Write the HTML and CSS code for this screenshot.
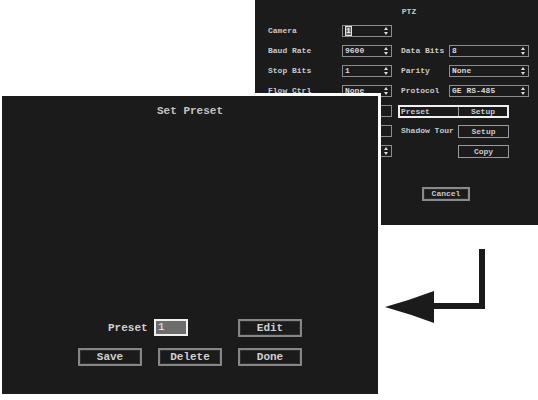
FILE: index.html
```html
<!DOCTYPE html>
<html lang="en">
<head>
    <meta charset="UTF-8">
    <title>PTZ - Set Preset</title>
    <link rel="stylesheet" href="styles.css">
</head>
<body>
    <div class="desk">
        <!-- PTZ setup window (behind) -->
        <div class="win ptz">
            <div class="ptz-title">PTZ</div>
            <div class="ptz-grid">
                <span class="lbl">Camera</span>
                <span class="sel cam"><i class="cur">1</i><b class="spin"></b></span>
                <span></span><span></span><span></span>

                <span class="lbl">Baud Rate</span>
                <span class="sel">9600<b class="spin"></b></span>
                <span></span>
                <span class="lbl">Data Bits</span>
                <span class="sel">8<b class="spin"></b></span>

                <span class="lbl">Stop Bits</span>
                <span class="sel">1<b class="spin"></b></span>
                <span></span>
                <span class="lbl">Parity</span>
                <span class="sel">None<b class="spin"></b></span>

                <span class="lbl">Flow Ctrl</span>
                <span class="sel">None<b class="spin"></b></span>
                <span></span>
                <span class="lbl">Protocol</span>
                <span class="sel">GE RS-485<b class="spin"></b></span>

                <span class="lbl">Address</span>
                <span class="sel">1</span>
                <span class="combo"><span class="combo-l">Preset</span><span class="combo-r">Setup</span></span>

                <span class="lbl">Cruise</span>
                <span class="sel">1</span>
                <span></span>
                <span class="lbl">Shadow Tour</span>
                <span class="btn-s">Setup</span>

                <span class="lbl">Copy To</span>
                <span class="sel">1<b class="spin"></b></span>
                <span></span><span></span>
                <span class="btn-s">Copy</span>
            </div>
            <div class="cancel-row"><span class="btn-s cancel">Cancel</span></div>
        </div>

        <!-- Set Preset window (front) -->
        <div class="win preset">
            <div class="preset-title">Set Preset</div>
            <div class="preset-body">
                <div class="preset-row">
                    <span class="preset-lbl">Preset</span>
                    <span class="num">1</span>
                    <span class="btn edit">Edit</span>
                </div>
                <div class="preset-row buttons">
                    <span class="btn">Save</span>
                    <span class="btn">Delete</span>
                    <span class="btn">Done</span>
                </div>
            </div>
        </div>

        <!-- arrow pointing back to the front window -->
        <svg class="arrow" width="120" height="90" viewBox="380 245 120 90">
            <rect x="479" y="249" width="6" height="60" fill="#1b1b1b"/>
            <rect x="430" y="303" width="55" height="6" fill="#1b1b1b"/>
            <path d="M385 307 Q410 300 434 291 L434 323 Q410 314 385 307 Z" fill="#1b1b1b"/>
        </svg>
    </div>
</body>
</html>
```

FILE: styles.css
```css
body {
    margin: 0;
    background-color: #ffffff;
    font-family: "Liberation Mono", "DejaVu Sans Mono", monospace;
    font-weight: bold;
}
.desk {
    position: relative;
    width: 538px;
    height: 400px;
    overflow: hidden;
}
.win {
    position: absolute;
    background-color: #1b1b1b;
    color: #c9c9c9;
    box-sizing: border-box;
}

/* PTZ window */
.ptz {
    left: 255px;
    top: 0;
    width: 300px;
    height: 225px;
    font-size: 8px;
    padding-left: 13px;
}
.ptz-title {
    height: 10px;
    line-height: 10px;
    margin-top: 7px;
    margin-left: 123px;
    width: 36px;
    text-align: center;
}
.ptz-grid {
    margin-top: 8px;
    display: grid;
    grid-template-columns: 74px 50px 9px 48px 80px;
    grid-auto-rows: 12px;
    row-gap: 8px;
    align-items: center;
}
.lbl {
    white-space: nowrap;
    line-height: 12px;
}
.sel {
    position: relative;
    height: 12px;
    line-height: 10px;
    padding-left: 2px;
    border: 1px solid #8c8c8c;
    box-sizing: border-box;
    color: #d8d8d8;
    white-space: nowrap;
}
.cam .cur {
    font-style: normal;
    display: inline-block;
    width: 5px;
    height: 8px;
    line-height: 8px;
    border: 1px solid #e0e0e0;
    color: #e8e8e8;
    background-color: #6a6a6a;
    vertical-align: top;
}
.spin {
    position: absolute;
    right: 2px;
    top: 1px;
    width: 5px;
    height: 8px;
}
.spin::before,
.spin::after {
    content: "";
    position: absolute;
    left: 0;
    border-left: 2.5px solid transparent;
    border-right: 2.5px solid transparent;
}
.spin::before {
    top: 0;
    border-bottom: 3px solid #dcdcdc;
}
.spin::after {
    bottom: 0;
    border-top: 3px solid #dcdcdc;
}
.combo {
    grid-column: 3 / 6;
    margin-left: 6px;
    margin-right: 20px;
    height: 13px;
    border: 2px solid #f0f0f0;
    box-sizing: border-box;
    display: flex;
    line-height: 9px;
}
.combo-l {
    width: 57px;
    padding-left: 1px;
    border-right: 1px solid #9a9a9a;
}
.combo-r {
    flex: 1;
    text-align: center;
}
.btn-s {
    margin-left: 9px;
    width: 51px;
    height: 13px;
    line-height: 11px;
    border: 1px solid #9a9a9a;
    box-sizing: border-box;
    text-align: center;
}
.cancel-row {
    margin-top: 30px;
    padding-left: 145px;
}
.cancel {
    display: block;
    width: 48px;
    height: 14px;
    line-height: 10px;
    border: 2px solid #8a8a8a;
    box-shadow: inset 0 0 0 1px #2a2a2a;
}

/* Set Preset window */
.preset {
    left: -1px;
    top: 93px;
    width: 382px;
    height: 304px;
    border: 3px solid #ffffff;
    font-size: 11px;
}
.preset-title {
    margin-top: 9px;
    margin-left: 155px;
    height: 13px;
    line-height: 13px;
    color: #c4c4c4;
}
.preset-body {
    margin-top: 201px;
    display: flex;
    flex-direction: column;
    gap: 12px;
}
.preset-row {
    display: flex;
    align-items: center;
    height: 17px;
}
.preset-lbl {
    margin-left: 106px;
    width: 46px;
    color: #d0d0d0;
}
.num {
    width: 34px;
    height: 17px;
    box-sizing: border-box;
    border: 2px solid #efefef;
    background-color: #6d6d6d;
    color: #eeeeee;
    font-weight: normal;
    line-height: 13px;
    padding-left: 2px;
}
.btn {
    width: 64px;
    height: 18px;
    box-sizing: border-box;
    border: 2px solid #858585;
    box-shadow: inset 0 0 0 1px #2e2e2e;
    text-align: center;
    line-height: 14px;
    color: #d0d0d0;
}
.edit {
    margin-left: 50px;
}
.buttons {
    height: 18px;
    padding-left: 76px;
    gap: 16px;
}
.arrow {
    position: absolute;
    left: 380px;
    top: 245px;
}
```
